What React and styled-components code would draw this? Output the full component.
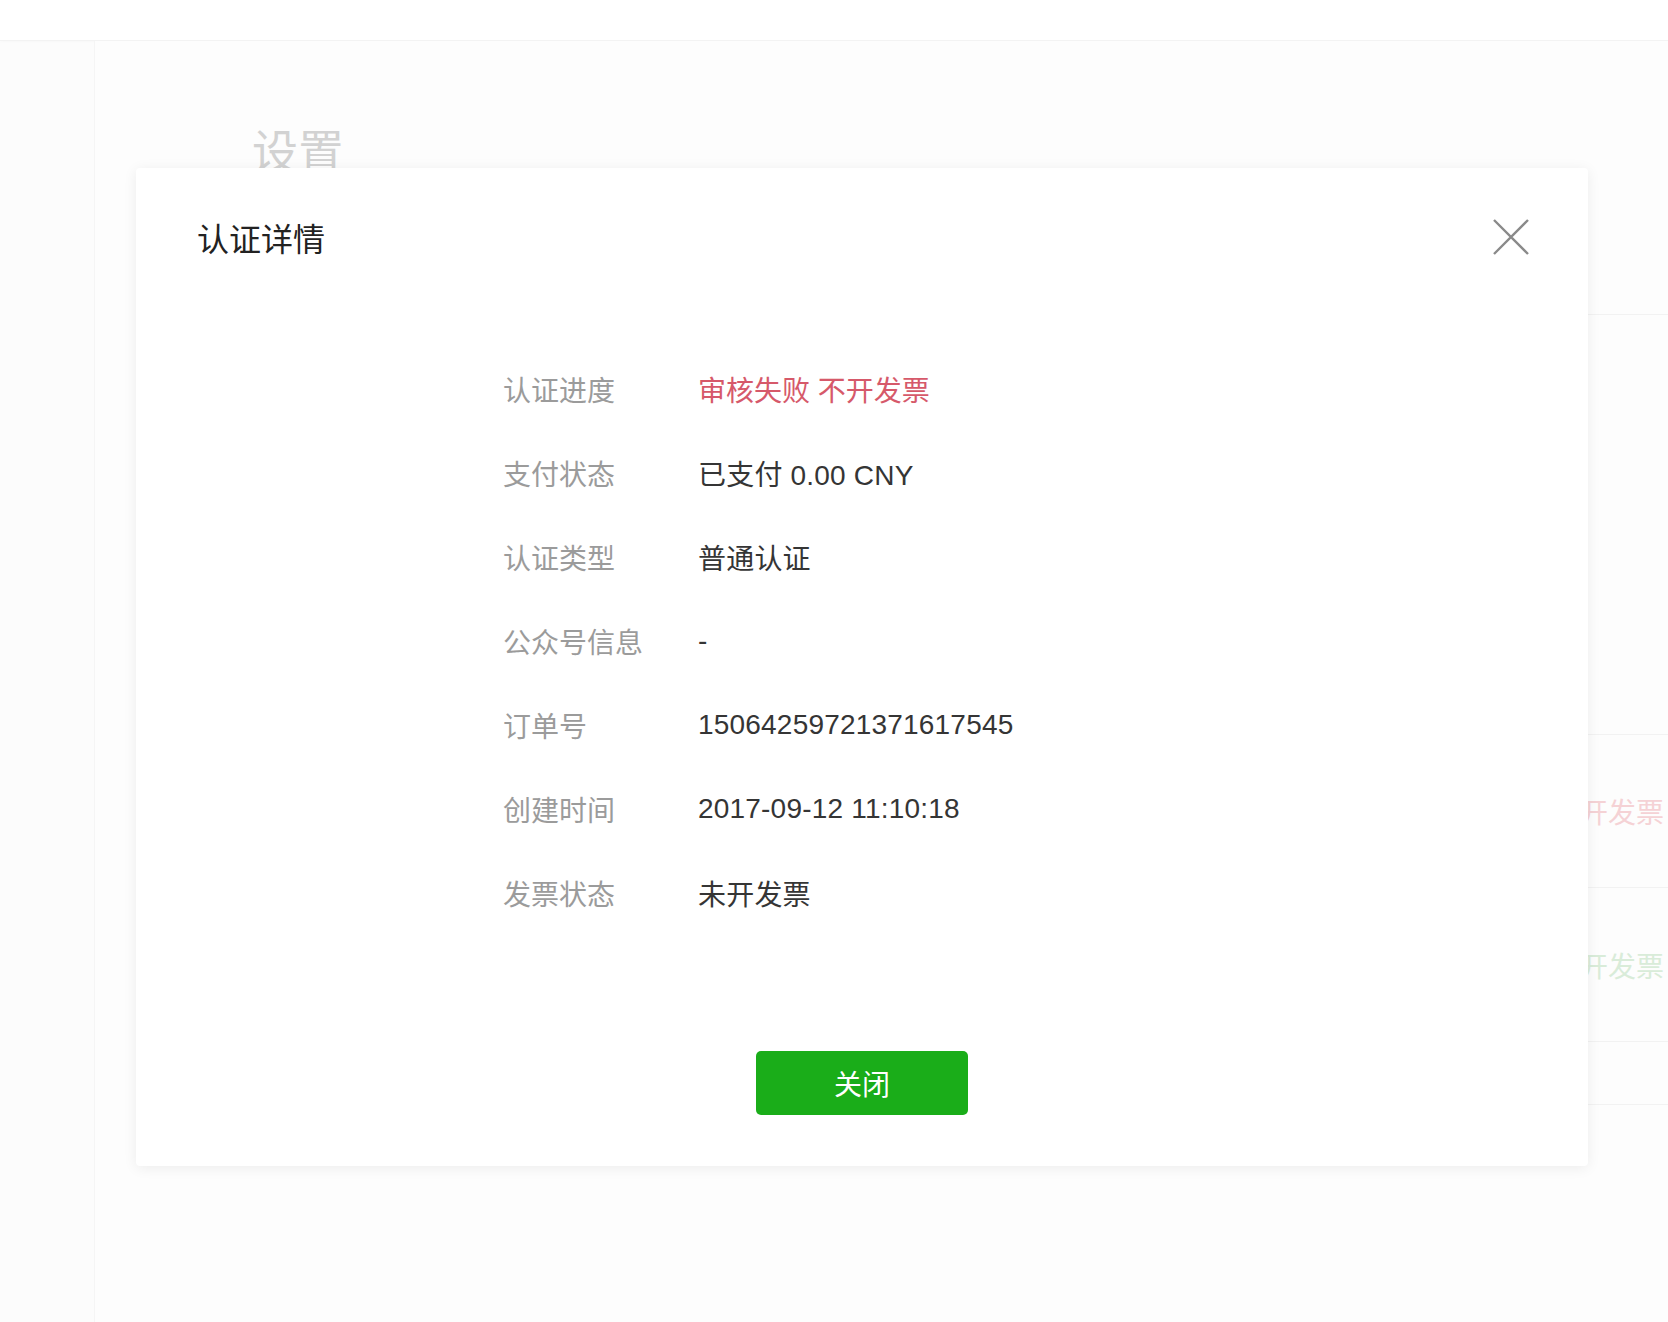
import React from 'react';
import styled, { createGlobalStyle } from 'styled-components';

const GlobalStyle = createGlobalStyle`
  body {
    margin: 0;
    background: #fcfcfc;
    font-family: "Liberation Sans", "Noto Sans CJK SC", sans-serif;
  }
`;

const Page = styled.div`
  position: relative;
  height: 1322px;
  background: #fcfcfc;
  overflow: hidden;
`;

const TopBar = styled.div`
  height: 40px;
  background: #fff;
  border-bottom: 1px solid #f3f3f3;
  box-shadow: 0 1px 3px rgba(0, 0, 0, 0.02);
`;

const Body = styled.div`
  display: flex;
  padding-left: 94px;
`;

const Panel = styled.div`
  flex: 1;
  height: 1281px;
  box-sizing: border-box;
  border-left: 1px solid #f5f5f5;
  background: #fdfdfd;
  padding: 84px 0 0 157px;
`;

const PageTitle = styled.h2`
  margin: 0;
  font-size: 46px;
  line-height: 46px;
  font-weight: normal;
  color: #d2d2d2;
  font-family: "Noto Sans CJK SC", sans-serif;
`;

const Table = styled.div`
  margin-top: 69px;
`;

const TableRow = styled.div`
  height: ${(p) => p.h}px;
  display: flex;
  align-items: center;
  justify-content: flex-end;
  padding-right: 4px;
  border-bottom: 1px solid #f2f2f2;
`;

const Ghost = styled.span`
  font-size: 28px;
  font-family: "Noto Sans CJK SC", sans-serif;
  color: ${(p) => p.color};
`;

const Modal = styled.div`
  position: absolute;
  left: 136px;
  top: 168px;
  width: 1452px;
  height: 998px;
  box-sizing: border-box;
  background: #fff;
  border-radius: 4px;
  box-shadow: 0 2px 14px rgba(0, 0, 0, 0.07);
  display: flex;
  flex-direction: column;
`;

const ModalHeader = styled.div`
  display: flex;
  align-items: center;
  justify-content: space-between;
  height: 38px;
  padding: 50px 58px 0 61px;
`;

const ModalTitle = styled.div`
  font-size: 32px;
  color: #222;
  font-family: "Noto Sans CJK SC", sans-serif;
`;

const CloseBtn = styled.div`
  width: 38px;
  height: 38px;
  cursor: pointer;
  svg {
    display: block;
  }
`;

const List = styled.div`
  margin-top: 91px;
  padding-left: 367px;
`;

const Row = styled.div`
  display: flex;
  align-items: center;
  height: 84px;
  font-size: 28px;
`;

const Label = styled.div`
  width: 195px;
  color: #9b9b9b;
  font-family: "Noto Sans CJK SC", sans-serif;
`;

const Value = styled.div`
  color: ${(p) => (p.error ? '#d6596a' : '#353535')};
  letter-spacing: ${(p) => (p.error ? '0' : '0.2px')};
`;

const Footer = styled.div`
  display: flex;
  justify-content: center;
  margin-top: 116px;
`;

const Button = styled.button`
  width: 212px;
  height: 64px;
  border: none;
  border-radius: 5px;
  background: #1aad19;
  color: #fff;
  font-size: 28px;
  font-family: "Noto Sans CJK SC", sans-serif;
  cursor: pointer;
`;

const rows = [
  { label: '认证进度', value: '审核失败 不开发票', error: true },
  { label: '支付状态', value: '已支付 0.00 CNY' },
  { label: '认证类型', value: '普通认证' },
  { label: '公众号信息', value: '-' },
  { label: '订单号', value: '15064259721371617545' },
  { label: '创建时间', value: '2017-09-12 11:10:18' },
  { label: '发票状态', value: '未开发票' },
];

const App = () => {
  return (
    <Page>
      <GlobalStyle />
      <TopBar />
      <Body>
        <Panel>
          <PageTitle>设置</PageTitle>
          <Table>
            <TableRow h={74} />
            <TableRow h={419} />
            <TableRow h={152}>
              <Ghost color="#f5d2d5">不开发票</Ghost>
            </TableRow>
            <TableRow h={153}>
              <Ghost color="#d9ecd9">不开发票</Ghost>
            </TableRow>
            <TableRow h={62} />
          </Table>
        </Panel>
      </Body>

      <Modal>
        <ModalHeader>
          <ModalTitle>认证详情</ModalTitle>
          <CloseBtn>
            <svg width="38" height="38" viewBox="0 0 38 38">
              <path d="M2 2 L36 36 M36 2 L2 36" stroke="#8a8a8a" strokeWidth="2.4" fill="none" />
            </svg>
          </CloseBtn>
        </ModalHeader>
        <List>
          {rows.map((r) => (
            <Row key={r.label}>
              <Label>{r.label}</Label>
              <Value error={r.error}>{r.value}</Value>
            </Row>
          ))}
        </List>
        <Footer>
          <Button>关闭</Button>
        </Footer>
      </Modal>
    </Page>
  );
};

export default App;
